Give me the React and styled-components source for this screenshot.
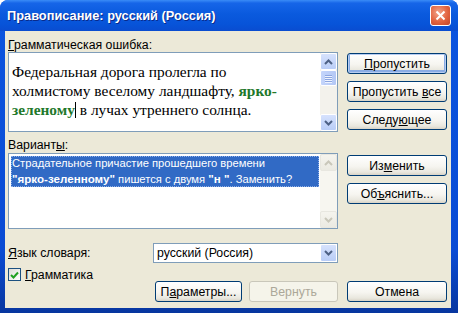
import React from "react";
import styled, { createGlobalStyle } from "styled-components";

const Global = createGlobalStyle`
  html, body { margin: 0; padding: 0; background: #ffffff; }
  body { font-family: "Liberation Sans", Arial, sans-serif; font-size: 12px; color: #000; }
`;

const Window = styled.div`
  width: 458px;
  height: 313px;
  box-sizing: border-box;
  display: flex;
  flex-direction: column;
  border-radius: 8px 8px 0 0;
  overflow: hidden;
  background: linear-gradient(180deg, #0b55e0 0%, #0a4bd4 80%, #07369f 100%);
`;

const TitleBar = styled.div`
  height: 31px;
  flex: none;
  display: flex;
  align-items: center;
  justify-content: space-between;
  padding: 0 7px 0 7px;
  background: linear-gradient(
    180deg,
    #3a8cf7 0%,
    #1665e8 10%,
    #0a5ade 45%,
    #0753d8 80%,
    #0a4cd0 100%
  );
`;

const Title = styled.span`
  color: #fff;
  font-weight: bold;
  font-size: 12.8px;
  text-shadow: 1px 1px 0 #0a2a8a;
`;

const CloseBtn = styled.div`
  width: 21px;
  height: 21px;
  box-sizing: border-box;
  border: 1px solid #fff;
  border-radius: 3px;
  background: radial-gradient(circle at 40% 35%, #f2a58c 0%, #e2633f 55%, #c2452a 100%);
  display: flex;
  align-items: center;
  justify-content: center;
`;

const Body = styled.div`
  flex: 1;
  margin: 0 7px 5px 5px;
  padding: 7px 4px 0 3px;
  background: #ece9d8;
  display: flex;
  flex-direction: column;
`;

const Columns = styled.div`
  display: grid;
  grid-template-columns: 330px 100px;
  column-gap: 9px;
`;

const LeftCol = styled.div`
  display: flex;
  flex-direction: column;
`;

const Label = styled.div`
  line-height: 14px;
  height: 14px;
  margin-top: ${(p) => p.$top || 0}px;
  font-size: 12.3px;
  white-space: nowrap;
`;

const U = styled.span`
  text-decoration: underline;
  text-underline-offset: 1px;
`;

const Field = styled.div`
  height: ${(p) => p.$h}px;
  margin-top: ${(p) => p.$top || 0}px;
  box-sizing: border-box;
  border: 1px solid #7f9db9;
  background: #fff;
  display: flex;
`;

const Sentence = styled.div`
  flex: 1;
  padding: 9px 3px 0 3px;
  font-family: "Liberation Serif", "Times New Roman", serif;
  font-size: 15.4px;
  line-height: 19px;
  white-space: nowrap;
`;

const Error = styled.span`
  color: #22782a;
  font-weight: bold;
`;

const Caret = styled.span`
  display: inline-block;
  width: 0;
  height: 16px;
  border-left: 1px solid #000;
  vertical-align: -3px;
`;

const Scrollbar = styled.div`
  width: 17px;
  flex: none;
  display: flex;
  flex-direction: column;
  background: ${(p) => (p.$disabled ? "#f7f6f0" : "#f3f2ec")};
`;

const Arrow = styled.div`
  width: 17px;
  height: 17px;
  box-sizing: border-box;
  border: 1px solid ${(p) => (p.$disabled ? "#e8e7e0" : "#fff")};
  border-radius: 2px;
  background: ${(p) =>
    p.$disabled
      ? "linear-gradient(180deg, #f5f4ee, #ebeae2)"
      : "linear-gradient(180deg, #d6e2fd, #b9cdf7)"};
  display: flex;
  align-items: center;
  justify-content: center;
`;

const Track = styled.div`
  flex: 1;
  display: flex;
  flex-direction: column;
`;

const Thumb = styled.div`
  height: 16px;
  box-sizing: border-box;
  border: 1px solid #fff;
  border-radius: 2px;
  background: linear-gradient(90deg, #c4d5fb, #b4c8f5);
  display: flex;
  flex-direction: column;
  align-items: center;
  justify-content: center;
  gap: 1px;
`;

const Grip = styled.div`
  width: 7px;
  height: 1px;
  background: #8ca6e0;
  box-shadow: 0 1px 0 #eef3ff;
`;

const ListArea = styled.div`
  flex: 1;
  padding: 2px 1px 0 2px;
`;

const Selected = styled.div`
  background: #316ac5;
  color: #fff;
  padding: 0 1px;
  line-height: 15px;
  font-size: 11.2px;
  white-space: nowrap;
  outline: 1px dotted #8fb0e8;
  outline-offset: -1px;

  b {
    font-size: 11.6px;
  }
`;

const ButtonStack = styled.div`
  display: flex;
  flex-direction: column;
  gap: 7px;
  padding-top: 15px;
`;

const Button = styled.div`
  width: ${(p) => p.$w || 100}px;
  height: 21px;
  margin-top: ${(p) => p.$top || 0}px;
  box-sizing: border-box;
  border: 1px solid ${(p) => (p.$disabled ? "#c9c7ba" : "#003c74")};
  border-radius: 3px;
  background: ${(p) =>
    p.$disabled
      ? "#f5f4ea"
      : "linear-gradient(180deg, #ffffff 0%, #f6f5f0 55%, #e9e7de 85%, #d8d3c6 100%)"};
  box-shadow: ${(p) =>
    p.$default ? "inset 0 0 0 1px #b7cdf1, inset 0 -1px 0 2px #8aace4" : "none"};
  color: ${(p) => (p.$disabled ? "#aca899" : "#000")};
  font-size: 12.3px;
  display: flex;
  align-items: center;
  justify-content: center;
  white-space: nowrap;
`;

const LangRow = styled.div`
  margin-top: 14px;
  display: grid;
  grid-template-columns: 145px 185px;
  align-items: center;
`;

const Combo = styled.div`
  height: 20px;
  box-sizing: border-box;
  border: 1px solid #7f9db9;
  background: #fff;
  display: flex;
  align-items: center;
  justify-content: space-between;
  padding: 0 0 0 3px;
  font-size: 12.3px;
`;

const ComboArrow = styled(Arrow)`
  height: 18px;
`;

const CheckRow = styled.div`
  margin-top: 5px;
  height: 13px;
  display: flex;
  align-items: center;
  gap: 4px;
  font-size: 12.3px;
`;

const CheckBox = styled.div`
  width: 13px;
  height: 13px;
  box-sizing: border-box;
  border: 1px solid #1c5180;
  background: linear-gradient(135deg, #dcdcd5, #ffffff);
  display: flex;
  align-items: center;
  justify-content: center;
`;

const Footer = styled.div`
  display: grid;
  grid-template-columns: 330px 100px;
  column-gap: 9px;
`;

const FooterLeft = styled.div`
  display: flex;
  justify-content: flex-end;
  gap: 7px;
`;

const Chevron = ({ up, color = "#4d6185" }) => (
  <svg width="9" height="6" viewBox="0 0 9 6">
    <path
      d={up ? "M1 5 L4.5 1.5 L8 5" : "M1 1 L4.5 4.5 L8 1"}
      fill="none"
      stroke={color}
      strokeWidth="2"
    />
  </svg>
);

const ScrollBarActive = () => (
  <Scrollbar>
    <Arrow>
      <Chevron up />
    </Arrow>
    <Track>
      <Thumb>
        <Grip />
        <Grip />
        <Grip />
        <Grip />
      </Thumb>
    </Track>
    <Arrow>
      <Chevron />
    </Arrow>
  </Scrollbar>
);

const ScrollBarDisabled = () => (
  <Scrollbar $disabled>
    <Arrow $disabled>
      <Chevron up color="#c9c7ba" />
    </Arrow>
    <Track />
    <Arrow $disabled>
      <Chevron color="#c9c7ba" />
    </Arrow>
  </Scrollbar>
);

export default function App() {
  return (
    <>
      <Global />
      <Window>
        <TitleBar>
          <Title>Правописание: русский (Россия)</Title>
          <CloseBtn>
            <svg width="11" height="11" viewBox="0 0 11 11">
              <path d="M1.5 1.5 L9.5 9.5 M9.5 1.5 L1.5 9.5" stroke="#fff" strokeWidth="2" />
            </svg>
          </CloseBtn>
        </TitleBar>
        <Body>
          <Columns>
            <LeftCol>
              <Label>
                <U>Г</U>рамматическая ошибка:
              </Label>
              <Field $h={80}>
                <Sentence>
                  Федеральная дорога пролегла по
                  <br />
                  холмистому веселому ландшафту, <Error>ярко-</Error>
                  <br />
                  <Error>зеленому</Error>
                  <Caret /> в лучах утреннего солнца.
                </Sentence>
                <ScrollBarActive />
              </Field>
              <Label $top={6}>
                Вариант<U>ы</U>:
              </Label>
              <Field $h={76} $top={1}>
                <ListArea>
                  <Selected>
                    Страдательное причастие прошедшего времени
                    <br />
                    <b>"ярко-зеленному"</b> пишется с двумя <b>"н "</b>. Заменить?
                  </Selected>
                </ListArea>
                <ScrollBarDisabled />
              </Field>
            </LeftCol>
            <ButtonStack>
              <Button $default>
                <span>
                  <U>П</U>ропустить
                </span>
              </Button>
              <Button>
                <span>
                  Пропустить <U>в</U>се
                </span>
              </Button>
              <Button>
                <span>
                  Следу<U>ю</U>щее
                </span>
              </Button>
              <Button $top={18}>
                <span>
                  Из<U>м</U>енить
                </span>
              </Button>
              <Button>
                <span>
                  Об<U>ъ</U>яснить...
                </span>
              </Button>
            </ButtonStack>
          </Columns>
          <LangRow>
            <Label>
              <U>Я</U>зык словаря:
            </Label>
            <Combo>
              <span>русский (Россия)</span>
              <ComboArrow>
                <Chevron />
              </ComboArrow>
            </Combo>
          </LangRow>
          <CheckRow>
            <CheckBox>
              <svg width="9" height="8" viewBox="0 0 9 8">
                <path d="M1 4 L3.5 6.5 L8 1.5" fill="none" stroke="#21a121" strokeWidth="2" />
              </svg>
            </CheckBox>
            <span>
              <U>Г</U>рамматика
            </span>
          </CheckRow>
          <Footer>
            <FooterLeft>
              <Button $w={87}>
                <span>
                  П<U>а</U>раметры...
                </span>
              </Button>
              <Button $w={89} $disabled>
                <span>Вернуть</span>
              </Button>
            </FooterLeft>
            <Button>
              <span>Отмена</span>
            </Button>
          </Footer>
        </Body>
      </Window>
    </>
  );
}
